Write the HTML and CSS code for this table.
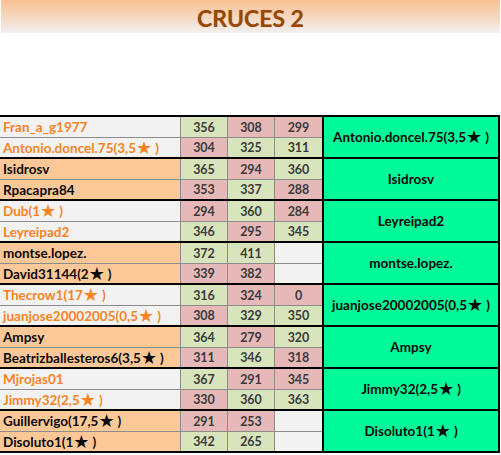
FILE: index.html
```html
<!DOCTYPE html>
<html>
<head>
<meta charset="utf-8">
<link rel="stylesheet" href="styles.css">
</head>
<body>
<header class="banner"><h1 class="title">CRUCES 2</h1></header>
<main class="board">
  <section class="group alt">
    <div class="name r1">Fran_a_g1977</div>
    <div class="num r1 win">356</div><div class="num r1 lose">308</div><div class="num r1 lose">299</div>
    <div class="winner">Antonio.doncel.75(3,5<span class="star">★</span>)</div>
    <div class="name r2">Antonio.doncel.75(3,5<span class="star">★</span>)</div>
    <div class="num r2 lose">304</div><div class="num r2 win">325</div><div class="num r2 win">311</div>
  </section>
  <section class="group main">
    <div class="name r1">Isidrosv</div>
    <div class="num r1 win">365</div><div class="num r1 lose">294</div><div class="num r1 win">360</div>
    <div class="winner">Isidrosv</div>
    <div class="name r2">Rpacapra84</div>
    <div class="num r2 lose">353</div><div class="num r2 win">337</div><div class="num r2 lose">288</div>
  </section>
  <section class="group alt">
    <div class="name r1">Dub(1<span class="star">★</span>)</div>
    <div class="num r1 lose">294</div><div class="num r1 win">360</div><div class="num r1 lose">284</div>
    <div class="winner">Leyreipad2</div>
    <div class="name r2">Leyreipad2</div>
    <div class="num r2 win">346</div><div class="num r2 lose">295</div><div class="num r2 win">345</div>
  </section>
  <section class="group main">
    <div class="name r1">montse.lopez.</div>
    <div class="num r1 win">372</div><div class="num r1 win">411</div><div class="num r1 empty"></div>
    <div class="winner">montse.lopez.</div>
    <div class="name r2">David31144(2<span class="star">★</span>)</div>
    <div class="num r2 lose">339</div><div class="num r2 lose">382</div><div class="num r2 empty"></div>
  </section>
  <section class="group alt">
    <div class="name r1">Thecrow1(17<span class="star">★</span>)</div>
    <div class="num r1 win">316</div><div class="num r1 lose">324</div><div class="num r1 lose">0</div>
    <div class="winner">juanjose20002005(0,5<span class="star">★</span>)</div>
    <div class="name r2">juanjose20002005(0,5<span class="star">★</span>)</div>
    <div class="num r2 lose">308</div><div class="num r2 win">329</div><div class="num r2 win">350</div>
  </section>
  <section class="group main">
    <div class="name r1">Ampsy</div>
    <div class="num r1 win">364</div><div class="num r1 lose">279</div><div class="num r1 win">320</div>
    <div class="winner">Ampsy</div>
    <div class="name r2">Beatrizballesteros6(3,5<span class="star">★</span>)</div>
    <div class="num r2 lose">311</div><div class="num r2 win">346</div><div class="num r2 lose">318</div>
  </section>
  <section class="group alt">
    <div class="name r1">Mjrojas01</div>
    <div class="num r1 win">367</div><div class="num r1 lose">291</div><div class="num r1 lose">345</div>
    <div class="winner">Jimmy32(2,5<span class="star">★</span>)</div>
    <div class="name r2">Jimmy32(2,5<span class="star">★</span>)</div>
    <div class="num r2 lose">330</div><div class="num r2 win">360</div><div class="num r2 win">363</div>
  </section>
  <section class="group main">
    <div class="name r1">Guillervigo(17,5<span class="star">★</span>)</div>
    <div class="num r1 lose">291</div><div class="num r1 lose">253</div><div class="num r1 empty"></div>
    <div class="winner">Disoluto1(1<span class="star">★</span>)</div>
    <div class="name r2">Disoluto1(1<span class="star">★</span>)</div>
    <div class="num r2 win">342</div><div class="num r2 win">265</div><div class="num r2 empty"></div>
  </section>
</main>
</body>
</html>
```
FILE: styles.css
```css
* { box-sizing: border-box; }
html, body { margin: 0; padding: 0; background: #ffffff; }
body { width: 501px; height: 455px; overflow: hidden; font-family: Lato, "Liberation Sans", Arial, sans-serif; }

.banner {
  margin: 0 1px;
  height: 33px;
  background: linear-gradient(to bottom, #f9c293 0%, #f5d9c4 55%, #f2f0ef 100%);
  display: flex;
  justify-content: center;
}
.title {
  margin: 0;
  padding-top: 7px;
  font-size: 23px;
  line-height: 23px;
  font-weight: bold;
  color: #974806;
  text-shadow: 0 0 1px rgba(151, 72, 6, 0.35);
}

.board {
  margin-top: 82px;
  width: 500px;
  border-top: 2px solid #000;
}
.group {
  display: grid;
  grid-template-columns: 181px 47px 47px 47px 178px;
  grid-template-rows: 21px 19px;
  border-bottom: 2px solid #000;
}
.name {
  padding-left: 3px;
  font-size: 13.5px;
  font-weight: bold;
  display: flex;
  align-items: center;
  white-space: nowrap;
  border-right: 1px solid #8c8c8c;
}
.r1 { border-bottom: 1px solid #8c8c8c; }
.alt .name { background: #f2f2f2; color: #f7841e; }
.main .name { background: #fcc897; color: #0a0a0a; }

.num {
  font-size: 12.5px;
  font-weight: bold;
  color: #3b3b3b;
  display: flex;
  align-items: center;
  justify-content: center;
  border-right: 1px solid #8c8c8c;
}
.num:nth-child(4), .num:nth-child(9) { border-right: none; }
.win { background: #d8e4bc; }
.lose { background: #e6b8b7; }
.empty { background: #f2f2f2; }

.winner {
  grid-column: 5;
  grid-row: 1 / span 2;
  background: #00fa9a;
  border-left: 2px solid #000;
  border-right: 2px solid #000;
  display: flex;
  align-items: center;
  justify-content: center;
  font-size: 13.5px;
  font-weight: bold;
  color: #0a0a0a;
  white-space: nowrap;
}
.star {
  font-family: "DejaVu Sans", sans-serif;
  font-size: 18px;
  line-height: 1;
  margin-right: 3px;
}
```
